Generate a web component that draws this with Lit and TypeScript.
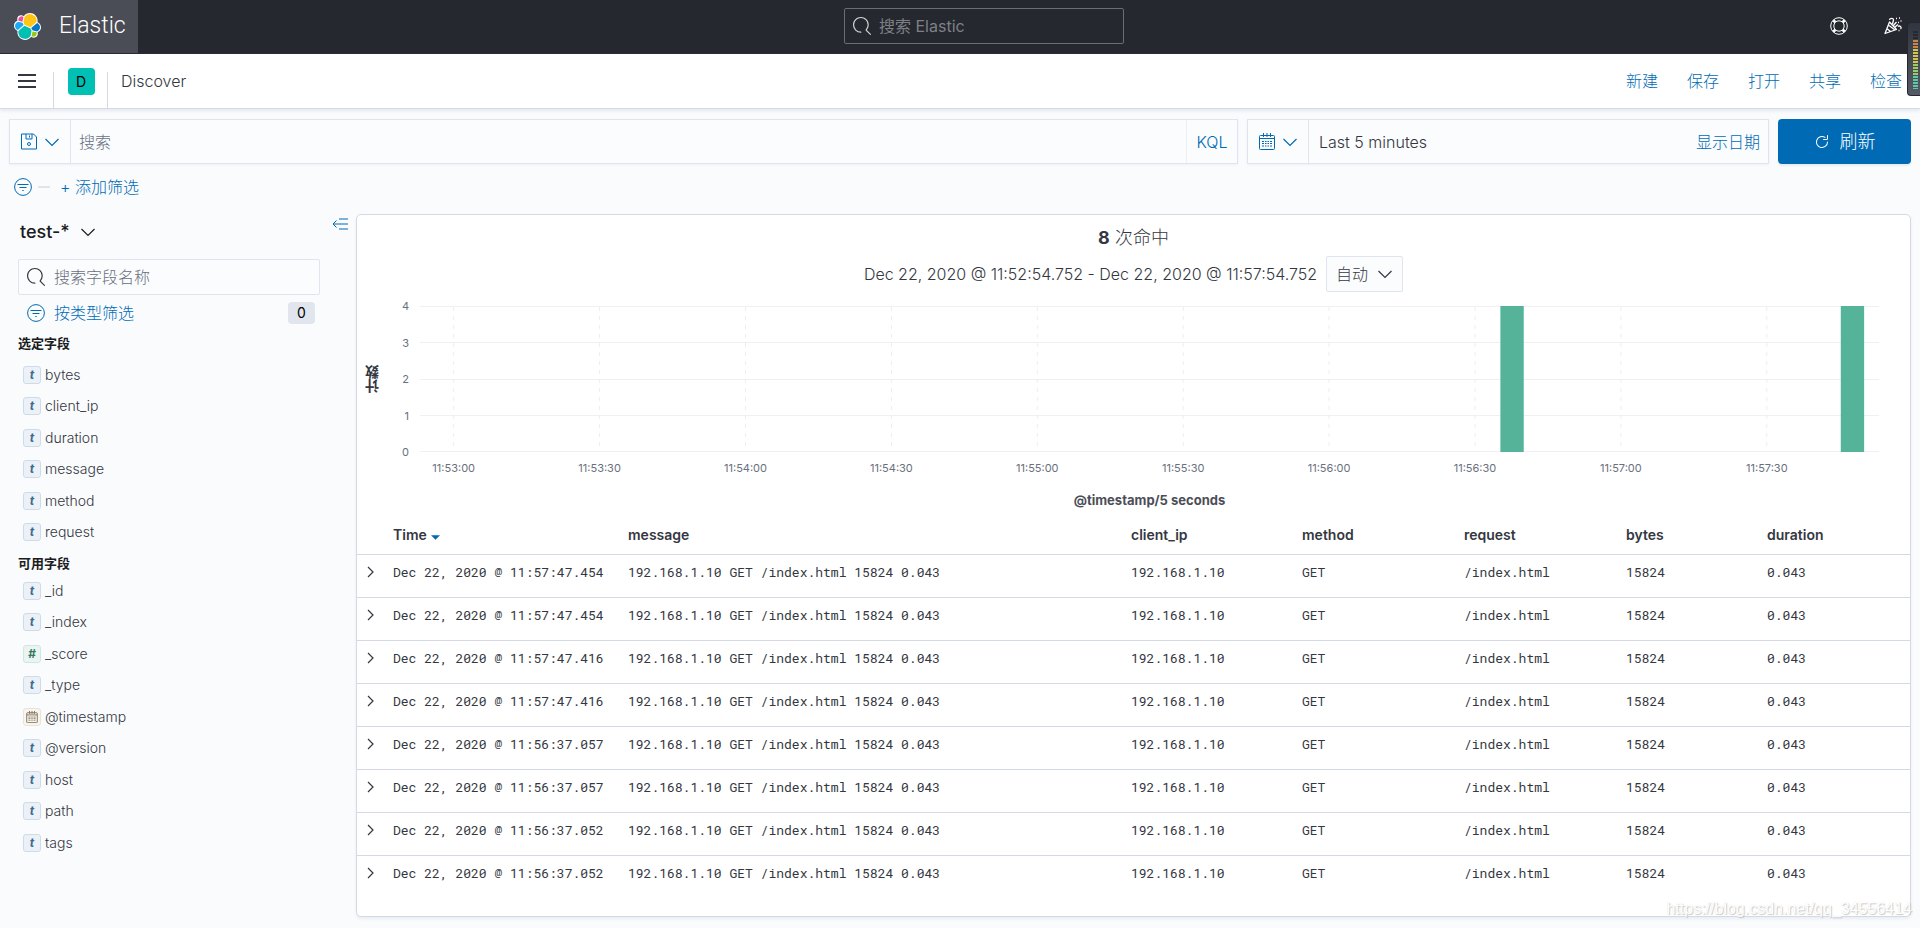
import { LitElement, html, css, svg } from "lit";
import { customElement } from "lit/decorators.js";

const chevronDown = html`<svg class="chev" viewBox="0 0 16 16" aria-hidden="true"><path d="M1.500 5L8 11.500 14.500 5" /></svg>`;

const searchIcon = html`<svg class="i18" viewBox="0 0 16 16" fill="currentColor" aria-hidden="true">
  <path d="M11.271 11.978l3.872 3.873a.502.502 0 0 0 .708 0 .502.502 0 0 0 0-.708l-3.565-3.564c2.38-2.747 2.267-6.923-.342-9.532-2.73-2.73-7.17-2.73-9.898 0-2.728 2.729-2.728 7.17 0 9.9a6.955 6.955 0 0 0 4.949 2.05.5.5 0 0 0 0-1 5.96 5.96 0 0 1-4.242-1.757 6.01 6.01 0 0 1 0-8.486 6.004 6.004 0 0 1 8.484 0 6.01 6.01 0 0 1 0 8.486.5.5 0 0 0 .034.738z" />
</svg>`;

const filterIcon = html`<svg class="i18 line" viewBox="0 0 18 18" aria-hidden="true">
  <circle cx="9" cy="9" r="8.4" /><path d="M3.500 6.500h11M5.500 9.500h7M8.300 12.500h1.400" />
</svg>`;

const calendarIcon = html`<svg class="cal" viewBox="0 0 16 17" aria-hidden="true">
  <path d="M1.5 2.5h13a1 1 0 0 1 1 1v12a1 1 0 0 1-1 1h-13a1 1 0 0 1-1-1v-12a1 1 0 0 1 1-1zM.5 5.5h15M4.5 0v4M11.500 0v4M8 0v4" />
  <path d="M3 8.500h2M6 8.500h1.500M8.500 8.500H10M11 8.500h2M3 10.500h2M6 10.500h1.500M8.500 10.500H10M11 10.500h2M3 13h2M6 13h1.500M8.500 13H10M11 13h2" />
</svg>`;

interface Field {
  name: string;
  type: "t" | "#" | "date";
}

interface Hit {
  time: string;
}

const SELECTED: Field[] = ["bytes", "client_ip", "duration", "message", "method", "request"].map((name) => ({ name, type: "t" }));

const AVAILABLE: Field[] = [
  { name: "_id", type: "t" },
  { name: "_index", type: "t" },
  { name: "_score", type: "#" },
  { name: "_type", type: "t" },
  { name: "@timestamp", type: "date" },
  { name: "@version", type: "t" },
  { name: "host", type: "t" },
  { name: "path", type: "t" },
  { name: "tags", type: "t" },
];

const HITS: Hit[] = ["57:47.454", "57:47.454", "57:47.416", "57:47.416", "56:37.057", "56:37.057", "56:37.052", "56:37.052"].map((t) => ({
  time: `Dec 22, 2020 @ 11:${t}`,
}));

const COLUMNS = ["message", "client_ip", "method", "request", "bytes", "duration"];
const TICKS = ["11:53:00", "11:53:30", "11:54:00", "11:54:30", "11:55:00", "11:55:30", "11:56:00", "11:56:30", "11:57:00", "11:57:30"];
const PLOT_HEIGHT = 145;

@customElement("discover-header")
class DiscoverHeader extends LitElement {
  static styles = css`
    :host { display: block; font-family: Inter, "Noto Sans CJK SC", sans-serif; font-weight: 300; }
    * { box-sizing: border-box; }
    .top { display: flex; justify-content: space-between; align-items: center; height: 54px; padding-bottom: 2px; background: #25282f; }
    .brand { display: flex; align-items: center; gap: 18px; width: 138px; height: 53px; padding-left: 14px; background: #4a4d56; color: #fff; text-decoration: none; font-family: Roboto, sans-serif; font-size: 23px; font-weight: 300; }
    .brand svg { width: 27px; height: 27px; flex: none; }
    .search { display: flex; align-items: center; gap: 8px; width: 280px; height: 36px; padding: 0 8px; border: 1px solid #6b6d72; border-radius: 2px; color: #d4d5d8; }
    .search svg { width: 18px; height: 18px; flex: none; }
    .search input { flex: 1; min-width: 0; border: 0; padding: 0; background: none; outline: 0; font: 400 16px Inter, "Noto Sans CJK SC", sans-serif; color: #fff; }
    .search input::placeholder { color: #7e8086; opacity: 1; }
    .tools { display: flex; justify-content: flex-end; gap: 36px; padding-right: 18px; }
    .tools button { width: 18px; height: 18px; padding: 0; border: 0; background: none; color: #fff; }
    .tools svg { display: block; width: 18px; height: 18px; fill: none; stroke: currentColor; }
    .bar { display: flex; align-items: center; height: 55px; background: #fff; border-bottom: 1px solid #d3dae6; box-shadow: 0 2px 3px #d3dae688; color: #343741; font-size: 16px; }
    .menu { width: 53px; height: 54px; padding: 0 0 0 18px; border: 0; background: none; }
    .menu svg { display: block; width: 18px; height: 14px; }
    .crumb { align-self: flex-end; width: 55px; height: 36px; border: solid #d3dae6; border-width: 0 1px; display: flex; justify-content: center; }
    .avatar { width: 27px; height: 27px; margin-top: -4px; margin-left: 1px; border-radius: 4px; background: #00bfb3; color: #000; font-size: 14px; font-weight: 400; line-height: 27px; text-align: center; }
    .title { margin: 0; padding-left: 13px; font-size: 16px; font-weight: 300; flex: 1; }
    nav { display: flex; gap: 29px; padding-right: 18px; }
    nav a { color: #006bb4; text-decoration: none; }
  `;

  render() {
    return html`
      <header class="top">
        <a class="brand" href="#">
          <svg viewBox="0 0 32 32" aria-hidden="true">
            <path fill="#fff" d="M32 16.770c0-2.680-1.660-5.030-4.170-5.940.11-.57.17-1.150.17-1.740C28 4.070 23.940 0 18.940 0c-2.930 0-5.660 1.410-7.370 3.790A4.800 4.800 0 0 0 8.620 2.780a4.830 4.830 0 0 0-4.830 4.830c0 .58.1 1.150.3 1.680A6.330 6.330 0 0 0 0 15.240c0 2.690 1.670 5.040 4.190 5.950-.11.57-.17 1.150-.17 1.740C4.020 27.940 8.080 32 13.080 32c2.940 0 5.660-1.410 7.360-3.800.85.67 1.890 1.030 2.970 1.030a4.830 4.830 0 0 0 4.830-4.830c0-.58-.1-1.150-.3-1.680A6.330 6.330 0 0 0 32 16.770z" />
            <path fill="#fec514" d="M12.580 13.790l7.010 3.200 7.070-6.200c.1-.51.15-1.020.15-1.560a7.870 7.870 0 0 0-14.370-4.440l-1.180 6.110z" />
            <path fill="#00bfb3" d="M5.330 21.210c-.1.51-.15 1.040-.15 1.580a7.930 7.930 0 0 0 14.480 4.460l1.170-6.090-1.560-2.980-7.040-3.200z" />
            <path fill="#f04e98" d="M5.290 9.090l4.810 1.140 1.050-5.470a3.800 3.800 0 0 0-6.080 3.040c0 .44.08.88.22 1.290" />
            <path fill="#1ba9f5" d="M4.870 10.240C2.730 10.950 1.230 13.010 1.230 15.270c0 2.200 1.360 4.160 3.400 4.930l6.740-6.090-1.240-2.640z" />
            <path fill="#93c90e" d="M20.880 27.250a3.790 3.790 0 0 0 6.070-3.030c0-.45-.08-.89-.22-1.300l-4.800-1.120z" />
            <path fill="#07c" d="M21.850 20.560l5.290 1.240c2.150-.71 3.650-2.780 3.650-5.040 0-2.190-1.360-4.150-3.400-4.920l-6.930 6.060z" />
          </svg>
          <span>Elastic</span>
        </a>
        <label class="search">${searchIcon}<input type="search" aria-label="搜索 Elastic" placeholder="搜索 Elastic" /></label>
        <div class="tools">
          <button aria-label="帮助">
            <svg viewBox="0 0 18 18"><circle cx="9" cy="9" r="8.300" /><circle cx="9" cy="9" r="5.200" /><path stroke-width="2.800" d="M3.300 3.300l2 2M14.700 3.300l-2 2M3.300 14.700l2-2M14.700 14.700l-2-2" /></svg>
          </button>
          <button aria-label="新闻">
            <svg viewBox="0 0 18 18" stroke-width="1.300"><path stroke-linejoin="round" d="M5.500 5L1 16.500l11.500-4zM5 8.500l6 4.500M3.500 12l3 2.500M5.500 3c0-2 4-2.500 4 0M9.500 3L8.500 7M9 9l3.500-4M11 10l3-2.500M14 9.500c2-1.500 4 1 2.500 2.500M12 1.500h1M15 1h1M16.500 4h1M14 5.500h1M14.500 13.500h1" /></svg>
          </button>
        </div>
      </header>
      <div class="bar">
        <button class="menu" aria-label="菜单"><svg viewBox="0 0 18 14"><path d="M0 1h18M0 7h18M0 13h18" stroke="#343741" stroke-width="2" /></svg></button>
        <div class="crumb"><span class="avatar">D</span></div>
        <h1 class="title">Discover</h1>
        <nav>${["新建", "保存", "打开", "共享", "检查"].map((t) => html`<a href="#">${t}</a>`)}</nav>
      </div>
    `;
  }
}

@customElement("hit-chart")
class HitChart extends LitElement {
  static styles = css`
    :host { display: block; font-family: Inter, "Noto Sans CJK SC", sans-serif; font-weight: 400; }
    .row { display: flex; padding: 0 31px 0 4px; }
    .ylabel { width: 24px; display: flex; align-items: center; justify-content: center; writing-mode: vertical-rl; transform: rotate(180deg); font-size: 14px; font-weight: 700; line-height: 24px; color: #343741; }
    .yticks { display: flex; flex-direction: column; justify-content: space-between; width: 24px; margin: -8px 11px -8px 0; text-align: right; font-size: 11px; line-height: 16px; color: #69707d; }
    .plot { flex: 1; min-width: 0; height: 146px; overflow: visible; display: block; }
    .grid { stroke: #eef0f4; }
    .dash { stroke: #eceef2; stroke-dasharray: 4 5; }
    .bar { fill: #54b399; }
    .tick { font-size: 11px; fill: #69707d; text-anchor: middle; }
    .xlabel { margin: 38px 0 0; padding-left: 32px; text-align: center; font-size: 13px; line-height: 20px; font-weight: 700; color: #4b4e57; }
  `;

  render() {
    const at = (i: number) => `${(2.31 + i * 10).toFixed(2)}%`;
    return html`
      <div class="row">
        <div class="ylabel">计数</div>
        <div class="yticks">${[4, 3, 2, 1, 0].map((n) => html`<span>${n}</span>`)}</div>
        <svg class="plot" role="img" aria-label="命中数直方图">
          ${[0, 1, 2, 3, 4].map((n) => svg`<line class="grid" x1="0" x2="100%" y1=${Math.round((n * PLOT_HEIGHT) / 4) + 0.5} y2=${Math.round((n * PLOT_HEIGHT) / 4) + 0.5} />`)}
          ${TICKS.map((t, i) => svg`<line class="dash" x1=${at(i)} x2=${at(i)} y1="1" y2=${PLOT_HEIGHT} /><text class="tick" x=${at(i)} y="166">${t}</text>`)}
          ${[74.05, 97.38].map((x) => svg`<rect class="bar" x="${x}%" y="0" width="1.6%" height=${PLOT_HEIGHT + 1} />`)}
        </svg>
      </div>
      <p class="xlabel">@timestamp/5 seconds</p>
    `;
  }
}

@customElement("app-root")
class AppRoot extends LitElement {
  static styles = css`
    :host { display: flex; flex-direction: column; min-height: 100vh; background: #fafbfd; color: #343741; font-family: Inter, "Noto Sans CJK SC", sans-serif; font-size: 16px; line-height: 24px; font-weight: 300; }
    * { box-sizing: border-box; }
    button, input, select { font: inherit; color: inherit; }
    button { padding: 0; border: 0; background: none; }
    input { border: 0; padding: 0; background: none; outline: 0; min-width: 0; }
    input::placeholder { color: #69707d; opacity: 1; }
    a { color: #006bb4; text-decoration: none; }
    .i18 { width: 18px; height: 18px; flex: none; }
    .line, .chev, .cal { fill: none; stroke: currentColor; }
    .chev { width: 16px; height: 16px; flex: none; stroke-width: 1.2; }
    .cal { width: 16px; height: 17px; flex: none; }
    .blue { color: #006bb4; }
    .query { display: flex; gap: 9px; padding: 10px 9px 0; }
    .box { display: flex; height: 45px; border: 1px solid #e0e4ee; background: #fbfcfd; box-shadow: 0 1px 2px #d3dae655; }
    .box.q { flex: 1; }
    .box.d { width: 522px; }
    .pick { display: flex; align-items: center; gap: 7px; width: 61px; padding: 0 10px 0 11px; border-right: 1px solid #e0e4ee; color: #006bb4; }
    .q input { flex: 1; padding-left: 8px; }
    .kql { width: 51px; border-left: 1px solid #eceff5; color: #006bb4; }
    .range { flex: 1; padding-left: 10px; text-align: left; color: #343741; }
    .dates { align-self: center; padding-right: 8px; }
    .refresh { display: flex; align-items: center; justify-content: center; gap: 10px; width: 133px; height: 45px; border-radius: 4px; background: #006bb4; color: #fff; font-size: 18px; box-shadow: 0 2px 2px #0001; }
    .refresh svg { width: 16px; height: 16px; }
    .filters { display: flex; align-items: center; height: 46px; padding-left: 14px; color: #006bb4; }
    .filters i { width: 12px; height: 2px; margin: 0 10px 0 6px; background: #dfe4ed; }
    main { flex: 1; display: flex; padding: 4px 9px 11px 18px; }
    aside { width: 338px; flex: none; display: flex; flex-direction: column; }
    .index { display: flex; justify-content: space-between; height: 30px; padding: 2px 8px 0 2px; align-items: flex-start; }
    .name { display: flex; align-items: center; gap: 10px; padding-top: 4px; font-size: 18px; font-weight: 500; color: #1a1c21; }
    .collapse { color: #006bb4; line-height: 0; padding-top: 2px; }
    .find { display: flex; align-items: center; gap: 9px; width: 302px; height: 36px; margin-top: 15px; padding: 0 8px; border: 1px solid #e0e4ee; background: #fbfcfd; border-radius: 2px; }
    .find input { flex: 1; }
    .type { display: flex; align-items: center; gap: 9px; width: 302px; height: 36px; padding: 0 5px 0 9px; text-align: left; }
    .type span { flex: 1; }
    .type .badge { flex: none; width: 27px; height: 22px; border-radius: 4px; background: #e0e5ee; color: #000; font-size: 14px; font-weight: 400; line-height: 22px; text-align: center; }
    h2 { margin: 0; font-size: 13px; line-height: 24px; font-weight: 700; color: #1a1c21; }
    ul { list-style: none; margin: 0; padding: 0 0 0 5px; font-size: 14px; }
    .sel { padding-top: 4px; padding-bottom: 3px; }
    li { display: flex; align-items: center; gap: 4px; height: 31px; }
    li:nth-child(even) { height: 32px; }
    .tok { width: 18px; height: 18px; border: 1px solid #cddceb; border-radius: 3px; background: #ebf1f7; color: #3f6a8f; display: grid; place-items: center; font: italic 700 12px/16px Inter, sans-serif; }
    .tok.num { border-color: #cde8df; background: #eaf5f2; color: #387765; }
    .tok.date { border-color: #ebe4d6; background: #f8f5ef; color: #7b705a; }
    .tok .cal { width: 12px; height: 12px; stroke-width: 1.3; }
    .panel { flex: 1; min-width: 0; border: 1px solid #d3dae6; border-radius: 5px; background: #fff; box-shadow: 0 2px 3px #d3dae666; }
    .hits { margin: 0; padding-top: 10px; text-align: center; font-size: 18px; line-height: 26px; }
    .hits strong { font-weight: 700; }
    .when { display: flex; align-items: center; justify-content: center; gap: 9px; margin: 5px 0 14px; }
    .pad { display: flex; align-items: center; position: relative; }
    .pad select { appearance: none; width: 77px; height: 36px; padding: 0 0 0 9px; border: 1px solid #e0e4ee; border-radius: 2px; background: #fbfcfd; outline: 0; }
    .pad .chev { position: absolute; right: 10px; pointer-events: none; }
    table { width: 100%; margin-top: 7px; border-collapse: collapse; table-layout: fixed; }
    .c0 { width: 28px; } .c1 { width: 235px; } .c2 { width: 503px; } .c3 { width: 171px; } .c4, .c5 { width: 162px; } .c6 { width: 141px; } .c7 { width: 151px; }
    th { height: 37px; padding: 0 8px; text-align: left; font-size: 14px; line-height: 20px; font-weight: 600; }
    th .sort { width: 9px; height: 5px; margin-left: 4px; fill: #006bb4; }
    td { height: 43px; padding: 7px 8px 14px; border-top: 1px solid #d3dae6; vertical-align: top; font: 13px/20px "Roboto Mono", "Liberation Mono", monospace; white-space: nowrap; }
    td.x { padding: 9px 0 0 6px; }
    td.x button { display: block; }
    td.x svg { display: block; width: 14px; height: 16px; fill: none; stroke: #343741; stroke-width: 1.200; }
    .meter { position: absolute; top: 22px; right: 0; width: 13px; height: 74px; padding: 8px 2px 8px 5px; border: 1px solid #23262d; border-right: 0; border-radius: 4px 0 0 4px; background: linear-gradient(#31353f, #565a66); }
    .meter svg { display: block; width: 5px; height: 58px; }
    .mark { position: absolute; right: 8px; bottom: 8px; font: 16px/22px "Liberation Sans", sans-serif; color: #fff; text-shadow: 1px 1px 1px #bbb, 0 0 1px #ddd; opacity: .8; pointer-events: none; }
    .page { position: relative; flex: 1; display: flex; flex-direction: column; }
  `;

  private field(f: Field) {
    const cls = f.type === "#" ? "tok num" : f.type === "date" ? "tok date" : "tok";
    return html`<li><span class=${cls}>${f.type === "date" ? calendarIcon : f.type}</span>${f.name}</li>`;
  }

  private hit(h: Hit) {
    return html`<tr>
      <td class="x"><button aria-label="展开"><svg viewBox="0 0 14 16"><path d="M5 3l5 5-5 5" /></svg></button></td>
      <td>${h.time}</td>
      <td>192.168.1.10 GET /index.html 15824 0.043</td>
      <td>192.168.1.10</td>
      <td>GET</td>
      <td>/index.html</td>
      <td>15824</td>
      <td>0.043</td>
    </tr>`;
  }

  render() {
    return html`
      <div class="page">
        <discover-header></discover-header>
        <div class="query">
          <div class="box q">
            <button class="pick" aria-label="已保存查询">
              <svg class="cal" viewBox="0 0 16 16"><path d="M.5.5h12l3 3v12H.5zM5 .5v5h6v-5M8.500 2v2" /><circle cx="8" cy="10.500" r="1.500" /></svg>${chevronDown}
            </button>
            <input type="text" aria-label="搜索" placeholder="搜索" />
            <button class="kql">KQL</button>
          </div>
          <div class="box d">
            <button class="pick" aria-label="日期">${calendarIcon}${chevronDown}</button>
            <button class="range">Last 5 minutes</button>
            <a class="dates" href="#">显示日期</a>
          </div>
          <button class="refresh">
            <svg viewBox="0 0 16 16" fill="currentColor" aria-hidden="true"><path d="M11.228 2.942a.5.5 0 1 1-.538.842A5 5 0 1 0 13 8a.5.5 0 1 1 1 0 6 6 0 1 1-2.772-5.058zM14 1.500v3A1.500 1.500 0 0 1 12.500 6h-3a.5.5 0 0 1 0-1h3a.5.5 0 0 0 .5-.5v-3a.5.5 0 1 1 1 0z" /></svg>刷新
          </button>
        </div>
        <div class="filters">${filterIcon}<i></i><a href="#">+ 添加筛选</a></div>
        <main>
          <aside>
            <div class="index">
              <button class="name">test-*${chevronDown}</button>
              <button class="collapse" aria-label="折叠"><svg viewBox="0 0 16 12" width="16" height="12" fill="none" stroke="currentColor"><path d="M1 6h15M4.500 2.500L1 6l3.500 3.500" /><path stroke-width="2" opacity=".5" d="M7 1h9M7 11h9" /></svg></button>
            </div>
            <label class="find">${searchIcon}<input type="search" aria-label="搜索字段名称" placeholder="搜索字段名称" /></label>
            <button class="type blue">${filterIcon}<span>按类型筛选</span><span class="badge">0</span></button>
            <h2>选定字段</h2>
            <ul class="sel">${SELECTED.map((f) => this.field(f))}</ul>
            <h2>可用字段</h2>
            <ul>${AVAILABLE.map((f) => this.field(f))}</ul>
          </aside>
          <section class="panel">
            <p class="hits"><strong>8</strong> 次命中</p>
            <div class="when">
              <span>Dec 22, 2020 @ 11:52:54.752 - Dec 22, 2020 @ 11:57:54.752</span>
              <span class="pad"><select aria-label="时间间隔"><option>自动</option></select>${chevronDown}</span>
            </div>
            <hit-chart></hit-chart>
            <table>
              <colgroup>${[0, 1, 2, 3, 4, 5, 6, 7].map((n) => html`<col class="c${n}" />`)}</colgroup>
              <thead>
                <tr>
                  <th></th>
                  <th>Time<svg class="sort" viewBox="0 0 8 4"><path d="M0 0h8L4 4z" /></svg></th>
                  ${COLUMNS.map((c) => html`<th>${c}</th>`)}
                </tr>
              </thead>
              <tbody>${HITS.map((h) => this.hit(h))}</tbody>
            </table>
          </section>
        </main>
        <div class="meter">
          <svg viewBox="0 0 5 58">${Array.from({ length: 20 }, (_, i) => svg`<rect y=${i * 3} width="5" height="2" fill=${i < 3 ? "#25282f" : i < 6 ? "#c98545" : i < 11 ? "#cfc64a" : i < 15 ? "#9ccb62" : "#5cc9a4"} />`)}</svg>
        </div>
        <div class="mark">https://blog.csdn.net/qq_34556414</div>
      </div>
    `;
  }
}
